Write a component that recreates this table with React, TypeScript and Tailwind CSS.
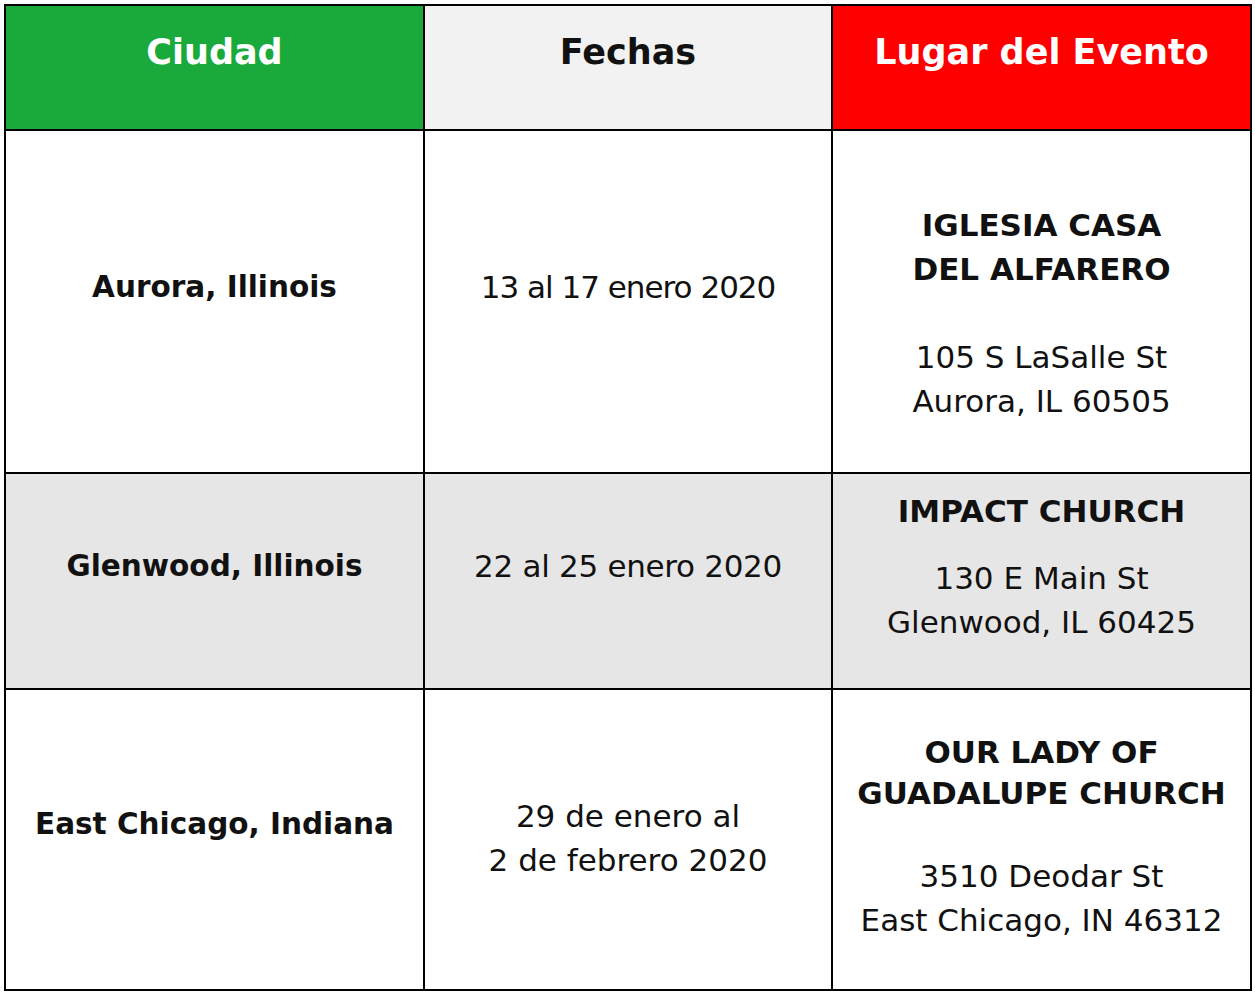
const font = { fontFamily: '"DejaVu Sans", "Liberation Sans", sans-serif' }

function HeaderCell({ label, className }: { label: string; className: string }) {
  return (
    <div className={`flex justify-center pt-[25px] text-[35px] font-bold leading-[42px] ${className}`}>
      {label}
    </div>
  )
}

export default function App() {
  return (
    <div className="min-h-screen bg-white p-[4px]" style={font}>
      <div className="grid w-[1248px] grid-cols-[417px_406px_417px] grid-rows-[123px_341px_214px_299px] gap-[2px] border-2 border-black bg-black text-center text-[31px] leading-[44px] text-[#111]">
        {/* Header */}
        <HeaderCell label="Ciudad" className="bg-[#1aaa3b] text-white" />
        <HeaderCell label="Fechas" className="bg-[#f2f2f2] text-[#111]" />
        <HeaderCell label="Lugar del Evento" className="bg-[#ff0000] text-white" />

        {/* Aurora */}
        <div className="flex flex-col justify-center bg-white pb-[29px] text-[29.5px] font-bold">Aurora, Illinois</div>
        <div className="flex flex-col justify-center bg-white pb-[29px] tracking-[-1px]">13 al 17 enero 2020</div>
        <div className="flex flex-col justify-center bg-white pt-[23px]">
          <div className="font-bold">
            IGLESIA CASA
            <br />
            DEL ALFARERO
          </div>
          <div className="mt-[44px]">
            105 S LaSalle St
            <br />
            Aurora, IL 60505
          </div>
        </div>

        {/* Glenwood */}
        <div className="flex flex-col justify-center bg-[#e7e6e6] pb-[30px] text-[29.5px] font-bold">Glenwood, Illinois</div>
        <div className="flex flex-col justify-center bg-[#e7e6e6] pb-[30px] tracking-[-0.3px]">22 al 25 enero 2020</div>
        <div className="flex flex-col justify-center bg-[#e7e6e6] pb-[30px]">
          <div className="font-bold">IMPACT CHURCH</div>
          <div className="mt-[23px]">
            130 E Main St
            <br />
            Glenwood, IL 60425
          </div>
        </div>

        {/* East Chicago */}
        <div className="flex flex-col justify-center bg-white pb-[31px] text-[29.5px] font-bold">East Chicago, Indiana</div>
        <div className="flex flex-col justify-center bg-white pb-[4px]">
          29 de enero al
          <br />2 de febrero 2020
        </div>
        <div className="flex flex-col justify-center bg-white pb-[5px]">
          <div className="font-bold leading-[41px]">
            OUR LADY OF
            <br />
            GUADALUPE CHURCH
          </div>
          <div className="mt-[40px]">
            3510 Deodar St
            <br />
            East Chicago, IN 46312
          </div>
        </div>
      </div>
    </div>
  )
}
